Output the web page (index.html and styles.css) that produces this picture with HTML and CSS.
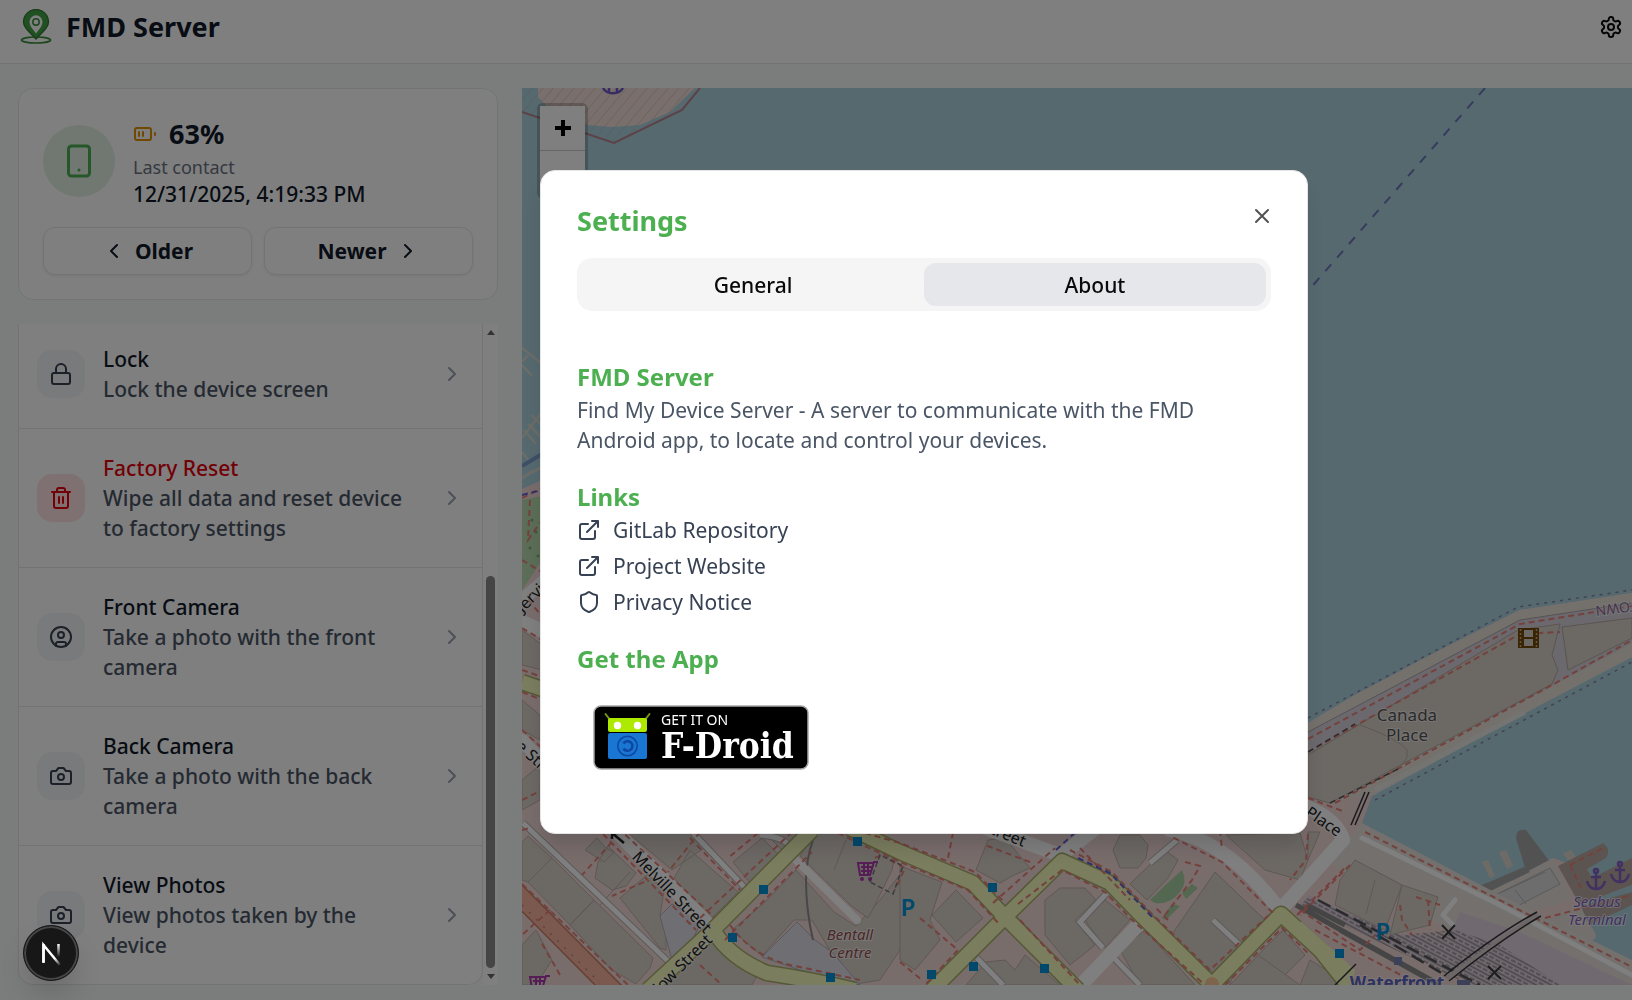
FILE: index.html
```html
<!DOCTYPE html>
<html lang="en">
<head>
<meta charset="utf-8">
<meta name="viewport" content="width=device-width, initial-scale=1">
<title>FMD Server</title>
<link rel="stylesheet" href="styles.css">
</head>
<body>
<svg class="sprite" aria-hidden="true">
  <symbol id="chevron-right" viewBox="0 0 24 24"><path d="m9 18 6-6-6-6"/></symbol>
  <symbol id="chevron-left" viewBox="0 0 24 24"><path d="m15 18-6-6 6-6"/></symbol>
  <symbol id="camera" viewBox="0 0 24 24"><path d="M14.5 4h-5L7 7H4a2 2 0 0 0-2 2v9a2 2 0 0 0 2 2h16a2 2 0 0 0 2-2V9a2 2 0 0 0-2-2h-3l-2.500-3z"/><circle cx="12" cy="13" r="3"/></symbol>
  <symbol id="external" viewBox="0 0 24 24"><path d="M15 3h6v6M10 14 21 3M18 13v6a2 2 0 0 1-2 2H5a2 2 0 0 1-2-2V8a2 2 0 0 1 2-2h6"/></symbol>
</svg>

<div class="app">
  <header class="header">
    <div class="brand">
      <svg class="logo" viewBox="0 0 36 36" aria-hidden="true">
        <ellipse cx="18" cy="31" rx="14.500" ry="3" fill="none" stroke="#388e3c" stroke-width="1.700"/>
        <path d="M18 30C13 24 5.500 19.500 5.500 13a12.500 12.500 0 0 1 25 0C30.500 19.500 23 24 18 30z" fill="#43a047" stroke="#2e7d32" stroke-width="1.300"/>
        <path d="M18 24.500C15 20.500 11.500 17 11.500 12.800a6.500 6.500 0 0 1 13 0C24.500 17 21 20.500 18 24.500z" fill="#fff"/>
        <circle cx="18" cy="13" r="3.200" fill="#fff" stroke="#388e3c" stroke-width="1.500"/>
      </svg>
      <h1 class="brand-name">FMD Server</h1>
    </div>
    <button class="icon-button" type="button" aria-label="Settings">
      <svg class="icon" viewBox="0 0 24 24"><path d="M12.220 2h-.44a2 2 0 0 0-2 2v.18a2 2 0 0 1-1 1.730l-.43.25a2 2 0 0 1-2 0l-.15-.08a2 2 0 0 0-2.730.73l-.22.38a2 2 0 0 0 .73 2.730l.15.1a2 2 0 0 1 1 1.720v.51a2 2 0 0 1-1 1.740l-.15.09a2 2 0 0 0-.73 2.730l.22.38a2 2 0 0 0 2.730.73l.15-.08a2 2 0 0 1 2 0l.43.25a2 2 0 0 1 1 1.730V20a2 2 0 0 0 2 2h.44a2 2 0 0 0 2-2v-.18a2 2 0 0 1 1-1.730l.43-.25a2 2 0 0 1 2 0l.15.08a2 2 0 0 0 2.730-.73l.22-.39a2 2 0 0 0-.73-2.730l-.15-.08a2 2 0 0 1-1-1.740v-.5a2 2 0 0 1 1-1.740l.15-.09a2 2 0 0 0 .73-2.730l-.22-.38a2 2 0 0 0-2.730-.73l-.15.08a2 2 0 0 1-2 0l-.43-.25a2 2 0 0 1-1-1.730V4a2 2 0 0 0-2-2z"/><circle cx="12" cy="12" r="3"/></svg>
    </button>
  </header>

  <main class="main">
    <aside class="sidebar">
      <section class="card">
        <div class="device">
          <div class="device-badge">
            <svg class="icon icon-lg" viewBox="0 0 24 24"><rect x="5" y="2" width="14" height="20" rx="2"/><path d="M12 18h.01"/></svg>
          </div>
          <div>
            <div class="battery">
              <svg class="icon battery-icon" viewBox="0 0 24 24"><rect x="2" y="6" width="16" height="12" rx="2"/><path d="M22 11v2M6 10v4M10 10v4"/></svg>
              63%
            </div>
            <div class="contact-label">Last contact</div>
            <div class="contact-time">12/31/2025, 4:19:33 PM</div>
          </div>
        </div>
        <div class="pager">
          <button class="button" type="button"><svg class="icon"><use href="#chevron-left"/></svg>Older</button>
          <button class="button" type="button">Newer<svg class="icon"><use href="#chevron-right"/></svg></button>
        </div>
      </section>

      <div class="scroller">
        <div class="actions">
          <button class="action" type="button">
            <span class="action-icon"><svg class="icon" viewBox="0 0 24 24"><rect x="3" y="11" width="18" height="11" rx="2"/><path d="M7 11V7a5 5 0 0 1 10 0v4"/></svg></span>
            <span class="action-text"><span class="action-title">Lock</span><span>Lock the device screen</span></span>
            <svg class="icon action-chevron"><use href="#chevron-right"/></svg>
          </button>
          <button class="action action-danger" type="button">
            <span class="action-icon"><svg class="icon" viewBox="0 0 24 24"><path d="M3 6h18M19 6v14a2 2 0 0 1-2 2H7a2 2 0 0 1-2-2V6M8 6V4a2 2 0 0 1 2-2h4a2 2 0 0 1 2 2v2M10 11v6M14 11v6"/></svg></span>
            <span class="action-text"><span class="action-title">Factory Reset</span><span>Wipe all data and reset device to factory settings</span></span>
            <svg class="icon action-chevron"><use href="#chevron-right"/></svg>
          </button>
          <button class="action" type="button">
            <span class="action-icon"><svg class="icon" viewBox="0 0 24 24"><circle cx="12" cy="12" r="10"/><circle cx="12" cy="10" r="3"/><path d="M7 20.660V19a2 2 0 0 1 2-2h6a2 2 0 0 1 2 2v1.660"/></svg></span>
            <span class="action-text"><span class="action-title">Front Camera</span><span>Take a photo with the front camera</span></span>
            <svg class="icon action-chevron"><use href="#chevron-right"/></svg>
          </button>
          <button class="action" type="button">
            <span class="action-icon"><svg class="icon"><use href="#camera"/></svg></span>
            <span class="action-text"><span class="action-title">Back Camera</span><span>Take a photo with the back camera</span></span>
            <svg class="icon action-chevron"><use href="#chevron-right"/></svg>
          </button>
          <button class="action" type="button">
            <span class="action-icon"><svg class="icon"><use href="#camera"/></svg></span>
            <span class="action-text"><span class="action-title">View Photos</span><span>View photos taken by the device</span></span>
            <svg class="icon action-chevron"><use href="#chevron-right"/></svg>
          </button>
        </div>
        <div class="scrollbar" aria-hidden="true">
          <span class="scroll-up"></span>
          <span class="scroll-thumb"></span>
          <span class="scroll-down"></span>
        </div>
      </div>
    </aside>

    <section class="map" aria-label="Map">
      <svg class="map-canvas" viewBox="522 88 1110 897" preserveAspectRatio="xMinYMin slice">
        <defs>
          <pattern id="hatch" width="8" height="8" patternUnits="userSpaceOnUse" patternTransform="rotate(40)"><path d="M0 0V8" stroke="#c9a09c" stroke-width="2"/></pattern>
          <pattern id="rails" width="7" height="7" patternUnits="userSpaceOnUse" patternTransform="rotate(28)"><path d="M0 1.500H7M0 5H5" stroke="#8f8a8f" stroke-width="1.500"/></pattern>
        </defs>
        <rect x="522" y="88" width="1110" height="897" fill="#aad3df"/>

        <!-- peninsula in the north-west -->
        <path d="M522 88V112L614 143 682 110 700 88z" fill="url(#hatch)" opacity=".3"/>
        <path d="M538 88V97L552 111 587 125 612 127 640 125 670 112 695 88z" fill="#f2dfd8"/>
        <path d="M538 88V97L552 111 587 125 612 127 640 125 670 112 695 88z" fill="url(#hatch)" opacity=".35"/>
        <path d="M522 112 614 143 682 110 700 88" fill="none" stroke="#b8848c" stroke-width="2"/>
        <g fill="none" stroke="#6a5ac8" stroke-width="2.500"><path d="M603 88a11 9 0 0 0 20 0M609 86v7M617 86v7"/></g>

        <!-- ferry route -->
        <path d="M1485 88 1308 291" stroke="#7074bc" stroke-width="2" stroke-dasharray="9 9"/>

        <!-- marina -->
        <g fill="none" stroke="#d8d8d2" stroke-width="2.500">
          <path d="M522 348 542 364M528 355 522 362M522 365 532 376M522 438 542 412M532 415 542 426M524 430 536 444M528 424 540 436M522 452 530 462"/>
          <path d="M522 478Q534 470 542 468" stroke-width="3"/>
        </g>
        <path d="M522 466 542 454" stroke="#7d9ed0" stroke-width="4"/>

        <!-- mainland, pier and terminal -->
        <path d="M522 489 542 480 800 500 1308 723 1355 695 1440 650 1520 610 1632 593V657L1540 705 1372 796 1362 823 1440 870 1453 878 1475 895 1520 873 1553 858 1567 863 1603 843 1608 855 1587 868 1592 878 1632 862V952L1600 953 1586 943 1632 985H522z" fill="#f2dad9"/>
        <path d="M1308 723 1355 695 1440 650 1520 610 1632 593V657L1540 705 1372 796 1330 800 1308 790z" fill="#e9e2da"/>
        <path d="M1308 732 1520 620 1632 603 1632 643 1560 682 1340 796 1308 785z" fill="#d6d2dc"/>
        <path d="M1308 755 1518 630 1560 624 1552 655 1558 670 1552 684 1330 803 1308 797z" fill="#d9d0c9" stroke="#b5aaa0"/>
        <path d="M1562 627 1632 618V638L1568 670z" fill="#d9d0c9" stroke="#b5aaa0"/>
        <path d="M1308 732 1520 620 1632 603" fill="none" stroke="#a8a4a4"/>
        <path d="M1360 725Q1400 740 1407 750 1410 765 1390 770" fill="none" stroke="#c0b0a0"/>
        <path d="M1375 790 1525 712" stroke="#e8e8e4" stroke-width="5"/>
        <path d="M1308 718 1518 607 1632 590M1375 800 1632 662M1370 828 1440 870" fill="none" stroke="#8484a8" stroke-width="1.500" stroke-dasharray="3 5"/>
        <path d="M522 500 542 496V560L522 590z" fill="#b8dcb0"/>
        <g fill="#7fae7a"><circle cx="532" cy="520" r="1.500"/><circle cx="536" cy="532" r="1.500"/><circle cx="530" cy="548" r="1.500"/><circle cx="538" cy="556" r="1.500"/></g>

        <!-- terminal docks -->
        <path d="M1440 876Q1462 874 1475 888L1525 868 1516 838Q1516 828 1526 830L1550 862 1478 902z" fill="#a6a4a4"/>
        <path d="M1440 874 1475 899 1553 858 1572 900 1500 920 1370 830z" fill="#e4dfd8"/>
        <path d="M1441 876Q1462 875 1473 889L1524 867 1530 872 1475 898z" fill="#a6a4a4"/>
        <path d="M1482 862 1488 860 1495 876 1490 878zM1499 852 1506 850 1513 866 1507 869zM1563 853 1571 850 1576 857 1568 861z" fill="#ddd6cc"/>
        <path d="M1485 900 1550 868 1560 884 1500 915zM1500 893 1545 872M1496 898 1506 912M1515 890 1526 904" fill="#dadada" stroke="#b5b5b5"/>
        <path d="M1558 866 1603 843Q1612 850 1606 858L1587 869 1592 878 1632 858V885L1580 905z" fill="#b7a9a0"/>
        <path d="M1580 905 1632 885V952Q1600 956 1587 943L1596 935z" fill="#aad3df"/>
        <path d="M1578 907 1632 892V905L1590 925z" fill="#b7a9a0"/>
        <path d="M1540 925 1580 905 1596 938 1585 945z" fill="#e4dfd8"/>
        <path d="M1362 823 1500 895 1632 960V985H1580L1480 945 1350 880 1330 860z" fill="#e6e1dc"/>

        <!-- rail yard -->
        <path d="M1460 912 1520 932 1632 985H1480L1300 905 1308 895 1400 935 1450 935z" fill="#e2d2e0"/>
        <path d="M1300 905 1308 898 1400 935 1455 930 1500 945 1560 985H1470z" fill="url(#rails)"/>
        <path d="M1296 905 1440 985M1340 930 1430 980M1306 905 1345 925" fill="none" stroke="#8a8a8a" stroke-width="5"/>
        <path d="M1318 900 1480 985M1360 925 1450 978" fill="none" stroke="#55555a" stroke-width="2.500" stroke-dasharray="14 6"/>

        <!-- buildings -->
        <g fill="#d9d0c9" stroke="#bdb0a6" stroke-width="1">
          <path d="M528 836 552 858 528 882 522 880V842zM552 858 594 900 570 925 528 882zM594 900 653 958 650 968 636 984 612 970 570 925z"/>
          <path d="M597 838 606 848 614 852 604 862 585 850zM608 846 636 873 626 886 612 890 595 878 598 862z"/>
          <path d="M620 898 648 874 664 890 660 916 666 926 666 950 660 948z"/>
          <path d="M628 833 690 833 704 848 672 870zM690 850 738 892 708 922 674 878z"/>
          <path d="M733 862 762 838 782 858 754 888zM765 833H805L782 850z"/>
          <path d="M765 902 796 870 834 912 856 926 880 900 902 872 918 880 900 950 880 980 850 985 812 920 794 920 762 956 732 930z"/>
          <path d="M815 833 850 833 895 855 892 870 875 905 868 918 850 905 800 856z"/>
          <path d="M663 985 710 938 760 970 752 985zM522 945 536 930 552 960 536 985H522z"/>
          <path d="M900 866 942 882 930 920 940 940 915 970 900 960zM932 915 956 890 983 918 956 942z"/>
          <path d="M976 870 988 840 1005 838 1030 868 1012 876 1000 883z"/>
          <path d="M986 962 1005 960 1015 970 1025 955 1060 985H966z"/>
          <path d="M1045 900 1060 888H1085L1096 900 1075 920 1095 945 1070 965 1045 935zM1085 920 1105 900 1130 920 1105 948z"/>
          <path d="M1120 950 1145 930 1195 985H1140zM1113 850 1120 835 1140 835 1148 845 1146 858 1138 868H1120z"/>
          <path d="M1130 884 1165 850 1178 860 1168 878 1147 900zM1168 940 1206 885 1215 872 1265 920 1240 945 1230 985z"/>
          <path d="M1226 835 1300 833 1308 860 1300 880 1265 870zM1258 955 1283 930 1305 955 1282 978z"/>
          <path d="M1230 985 1258 955 1300 985zM1308 832 1320 832 1308 860zM1340 880 1355 860 1402 885 1385 930 1335 905z"/>
          <path d="M1402 885 1438 897 1430 925 1390 935zM1310 960 1350 985H1300z"/>
          <path d="M522 630 542 645V670L522 665zM522 700 540 715V740L522 730zM522 780 540 765V800L522 810z"/>
          <path d="M630 872 600 905M846 840 834 870M1005 905 1030 930M1375 880 1366 914" fill="none"/>
        </g>
        <path d="M762 957 797 922 815 940 832 952 860 985 800 970zM660 916 672 904 702 920 690 945 672 960z" fill="#dcdce6" stroke="#b0b0bc"/>
        <path d="M813 840Q806 860 806 880 806 910 813 940" fill="none" stroke="#8e8e90" stroke-width="2"/>
        <path d="M1150 900Q1165 885 1182 870 1188 882 1180 892 1170 905 1155 903zM1182 893 1192 884 1198 888 1186 899zM1162 918 1172 904 1180 906 1166 920z" fill="#a9cfa0"/>

        <!-- minor streets -->
        <path d="M523 823 670 963M693 833 747 890M760 835Q778 836 787 843M1107 893 1080 922 1103 948M1113 957 1140 985M1150 863 1177 840M1213 920 1242 947M977 958 1003 985" fill="none" stroke="#b9b3b3" stroke-width="7"/>
        <path d="M523 823 670 963M693 833 747 890M760 835Q778 836 787 843M1107 893 1080 922 1103 948M1113 957 1140 985M1150 863 1177 840M1213 920 1242 947M977 958 1003 985" fill="none" stroke="#fff" stroke-width="5"/>
        <g fill="none" stroke="#fff" stroke-width="14" stroke-linecap="round" stroke-linejoin="round">
          <path d="M607 822 707 923M980 826 1060 855M1064 853 1100 825M1143 920 1078 988M1170 830Q1230 842 1281 912M1283 907 1343 840Q1338 820 1305 806M522 622 545 632"/>
          <path d="M793 857 857 920" stroke-width="8"/>
          <path d="M1362 838 1500 905 1632 975" stroke-width="5"/>
          <path d="M1455 900 1443 915 1453 925" stroke-width="5"/>
          <path d="M522 600 545 580M522 740 545 765" stroke-width="13"/>
        </g>

        <!-- secondary roads -->
        <g fill="none" stroke-linejoin="round">
          <path d="M648 990 713 930 812 830M713 930Q730 958 767 973 813 980 855 990M850 828 900 852 973 883 1005 917 1078 990M932 990 1005 917 1062 861 1110 883 1143 917 1212 985 1281 914 1320 950 1352 990M522 682 545 690" stroke="#a9b06a" stroke-width="17"/>
          <path d="M648 990 713 930 812 830M713 930Q730 958 767 973 813 980 855 990M850 828 900 852 973 883 1005 917 1078 990M932 990 1005 917 1062 861 1110 883 1143 917 1212 985 1281 914 1320 950 1352 990M522 682 545 690" stroke="#f7fabf" stroke-width="14"/>
          <path d="M1290 920 1302 922 1355 970 1352 985 1340 975z" fill="#f7fabf"/>
          <path d="M515 891 615 992" stroke="#c97f66" stroke-width="20"/>
          <path d="M515 891 615 992" stroke="#f9b29c" stroke-width="17"/>
          <circle cx="1212" cy="984" r="7" fill="#fcc99a"/>
          <path d="M522 905 600 983" stroke="#b38b86" stroke-width="1.500" stroke-dasharray="2 8"/>
        </g>

        <!-- footpaths -->
        <g fill="none" stroke="#e8827a" stroke-width="2" stroke-dasharray="6 4">
          <path d="M522 884 628 985M522 830 530 828M603 834 696 930M618 828 714 917M612 842 582 875M644 882 612 896M700 832 668 872M690 838 740 890"/>
          <path d="M700 918 790 834M725 940 812 852M730 925Q755 960 800 967L860 980M700 965 722 985M550 910 522 935M560 975 540 940"/>
          <path d="M758 833 728 858M838 833 858 843 900 862 968 890 1000 925M865 833 900 843 975 872 1005 903M1018 904 1062 870 1105 892 1130 918 1205 985"/>
          <path d="M993 903 1055 848M1030 862 985 845M948 858 953 833M920 918 958 950 925 985M1020 920 1080 985M900 962 922 980"/>
          <path d="M1070 850 1112 872 1150 912 1210 970 1272 912 1222 862 1170 836M1080 848 1130 900M1297 915 1345 868M1225 985 1282 928 1310 955M1220 830 1222 850M1308 834 1306 860 1290 880"/>
          <path d="M1185 862 1200 866 1192 880 1165 915M1168 920 1156 908M890 860 905 868 895 890M875 858 885 853"/>
          <path d="M1308 739 1520 624 1632 606M1308 752 1520 634 1560 632M1335 803 1552 685 1632 640M1308 798 1345 812"/>
          <path d="M1365 832 1632 967M1400 905 1402 920 1412 935M1428 900 1430 930M1416 897 1440 905M1570 865 1605 847M1570 865 1582 890M1545 918 1632 895M1300 910 1360 950 1375 935M1315 930 1420 985M1350 865 1300 915"/>
          <path d="M522 498 542 488M530 500 528 540 542 520M522 560 545 574M528 600 542 616M522 628 542 640M522 670 542 677M522 692 542 700M522 730 542 748M522 800 542 790"/>
        </g>
        <g fill="none" stroke="#6262d6" stroke-width="2" stroke-dasharray="6 4">
          <path d="M1056 850 1078 830M1078 858 1110 873 1152 917M522 495 542 490"/>
        </g>
        <path d="M1308 752 1355 724M1330 803 1400 768" fill="none" stroke="#555" stroke-width="1.500" stroke-dasharray="6 4"/>
        <path d="M1447 978 1538 914" fill="none" stroke="#d8cfcc" stroke-width="5"/>
        <path d="M1369 792 1355 825M1365 792 1351 825M1335 985 1356 964M1444 976Q1495 935 1537 912M1449 981Q1500 940 1541 916" fill="none" stroke="#33333a" stroke-width="1.500"/>
        <path d="M870 882 880 855 903 866 893 894z" fill="none" stroke="#777" stroke-width="1.500" stroke-dasharray="5 3"/>
        <path d="M1442 925 1455 939M1455 925 1442 939M1488 966 1501 979M1501 966 1488 979" stroke="#3c3c3c" stroke-width="2"/>
        <path d="M612 833 624 843M612 833v6M612 833h6" stroke="#222" stroke-width="2.500" fill="none"/>

        <!-- stops and parking -->
        <g fill="#0092da">
          <path d="M853 837h9v9h-9zM759 885h9v9h-9zM728 933h9v9h-9zM826 973h9v9h-9zM988 883h9v9h-9zM927 970h9v9h-9zM969 962h9v9h-9zM1040 964h9v9h-9zM1335 949h9v9h-9z"/>
        </g>
        <path d="M1394 957h8v8h-8zM1457 980h13v6h-13z" fill="#7981b0"/>
        <g fill="none" stroke="#ac39ac" stroke-width="2">
          <path d="M878 862H874L870 875H860L858 863H873M861 867H872M861 871H871M864 863V875M868 863V875"/>
          <path d="M550 976H546L542 989H532L530 977H545M533 981H544M536 977V988M540 977V988"/>
          <circle cx="862" cy="879" r="1"/><circle cx="870" cy="879" r="1"/>
        </g>
        <g fill="none" stroke="#8461c4" stroke-width="2.500">
          <path d="M1596 873V888M1591 877H1601M1587 881Q1589 889 1596 889 1603 889 1605 881"/><circle cx="1596" cy="871" r="2"/>
          <path d="M1620 866V881M1615 870H1625M1611 874Q1613 882 1620 882 1627 882 1629 874"/><circle cx="1620" cy="864" r="2"/>
        </g>
        <path d="M1518 628h21v20h-21z" fill="#734a08"/>
        <path d="M1524 630h9v7h-9zM1524 639h9v7h-9z" fill="#d9d0c9"/>
        <path d="M1520.500 629V647M1536.500 629V647" stroke="#c9b08a" stroke-width="1.500" stroke-dasharray="2 2"/>

        <g class="map-labels" text-anchor="middle">
          <text class="street" transform="translate(668 896) rotate(46)">Melville Street</text>
          <text class="street" text-anchor="end" transform="translate(713 941) rotate(-45)">Thurlow Street</text>
          <text class="street" text-anchor="end" transform="translate(1023 847) rotate(22)">West Hastings Street</text>
          <text class="street" text-anchor="end" transform="translate(1337 837) rotate(34)">Canada Place</text>
          <text class="street" text-anchor="end" transform="translate(551 585) rotate(-45)">Jervis</text>
          <text class="street" transform="translate(531 762) rotate(42)">e Stre</text>
          <text class="place" x="1407" y="721">Canada</text><text class="place" x="1407" y="741">Place</text>
          <text class="shop" x="850" y="940">Bentall</text><text class="shop" x="850" y="958">Centre</text>
          <text class="transit" x="1597" y="907">Seabus</text><text class="transit" x="1597" y="925">Terminal</text>
          <text class="station" x="1397" y="989">Waterfront</text>
          <text class="pier" text-anchor="end" transform="translate(1595 606) rotate(173)">DOWNTOWN</text>
          <text class="parking" x="908" y="916">P</text><text class="parking" x="1383" y="940">P</text>
        </g>
      </svg>
      <div class="zoom-control">
        <button class="zoom-button" type="button" aria-label="Zoom in"><svg viewBox="0 0 16 16" width="16" height="16"><path d="M8 0V16M0 8H16" stroke="#000" stroke-width="4"/></svg></button>
        <button class="zoom-button" type="button" aria-label="Zoom out"></button>
      </div>
    </section>
  </main>
</div>

<div class="overlay">
  <div class="dialog" role="dialog" aria-modal="true" aria-labelledby="dialog-title">
    <h2 class="dialog-title" id="dialog-title">Settings</h2>
    <button class="dialog-close" type="button" aria-label="Close"><svg class="icon" viewBox="0 0 24 24"><path d="M18 6 6 18M6 6l12 12"/></svg></button>
    <div class="tabs" role="tablist">
      <button class="tab" type="button" role="tab" aria-selected="false">General</button>
      <button class="tab tab-active" type="button" role="tab" aria-selected="true">About</button>
    </div>
    <div class="about" role="tabpanel">
      <section>
        <h3 class="about-heading">FMD Server</h3>
        <p class="about-text">Find My Device Server - A server to communicate with the FMD Android app, to locate and control your devices.</p>
      </section>
      <section>
        <h3 class="about-heading">Links</h3>
        <div class="links">
          <a class="link" href="#gitlab"><svg class="icon"><use href="#external"/></svg>GitLab Repository</a>
          <a class="link" href="#website"><svg class="icon"><use href="#external"/></svg>Project Website</a>
          <a class="link" href="#privacy"><svg class="icon" viewBox="0 0 24 24"><path d="M20 13c0 5-3.500 7.500-7.660 8.950a1 1 0 0 1-.67-.01C7.500 20.500 4 18 4 13V6a1 1 0 0 1 1-1c2 0 4.500-1.200 6.240-2.720a1.170 1.170 0 0 1 1.520 0C14.510 3.810 17 5 19 5a1 1 0 0 1 1 1z"/></svg>Privacy Notice</a>
        </div>
      </section>
      <section>
        <h3 class="about-heading">Get the App</h3>
        <a class="store" href="#fdroid" aria-label="Get it on F-Droid">
          <svg viewBox="0 0 248 96" width="248" height="96">
            <rect x="17" y="17" width="214" height="63" rx="7" fill="#000" stroke="#a6a6a6" stroke-width="1.500"/>
            <path d="M28.500 25 32 29.500M72.500 25 69 29.500" stroke="#769616" stroke-width="2" stroke-linecap="round"/>
            <rect x="31" y="29" width="39" height="14" rx="2" fill="#aeea00"/>
            <circle cx="40.500" cy="36.500" r="3.700" fill="#fff"/><circle cx="60.500" cy="36.500" r="3.700" fill="#fff"/>
            <rect x="31" y="44" width="39" height="26" rx="2" fill="#1976d2"/>
            <g fill="none" stroke="#0d47a1"><circle cx="50.500" cy="57" r="9.700" stroke-width="1.500"/><path d="M46.500 54.500A4.800 4.800 0 1 1 46.500 59.500" stroke-width="2.500"/></g>
            <text class="store-small" x="84" y="36">GET IT ON</text>
            <text class="store-name" x="84" y="69">F-Droid</text>
          </svg>
        </a>
      </section>
    </div>
  </div>
</div>

<button class="devtools" type="button" aria-label="Open developer tools">
  <svg viewBox="0 0 40 40" width="40" height="40" fill="none">
    <defs>
      <linearGradient id="n-diagonal" x1="20" y1="20" x2="30" y2="32" gradientUnits="userSpaceOnUse"><stop offset=".4" stop-color="#fff"/><stop offset="1" stop-color="#fff" stop-opacity="0"/></linearGradient>
      <linearGradient id="n-stem" x1="28" y1="11" x2="28" y2="24" gradientUnits="userSpaceOnUse"><stop stop-color="#fff"/><stop offset="1" stop-color="#fff" stop-opacity="0"/></linearGradient>
    </defs>
    <path d="M12.500 29V12L29 32" stroke="url(#n-diagonal)" stroke-width="2.500"/>
    <path d="M12.500 30V11" stroke="#fff" stroke-width="2.500"/>
    <path d="M27.500 11V26" stroke="url(#n-stem)" stroke-width="2.500"/>
  </svg>
</button>
</body>
</html>
```

FILE: styles.css
```css
* { box-sizing: border-box; }

body {
  margin: 0;
  height: 100vh;
  overflow: hidden;
  background: #f7fbf8;
  color: #101828;
  font: 21px/30px "Noto Sans", sans-serif;
}

h1, h2, h3, p { margin: 0; }
button { font: inherit; color: inherit; cursor: pointer; }

.sprite { display: none; }

.icon {
  width: 24px;
  height: 24px;
  flex: none;
  fill: none;
  stroke: currentColor;
  stroke-width: 2;
  stroke-linecap: round;
  stroke-linejoin: round;
}
.icon-lg { width: 36px; height: 36px; }

.app { display: flex; flex-direction: column; height: 100vh; }

.header {
  display: flex;
  align-items: center;
  justify-content: space-between;
  padding: 9px 9px 18px 18px;
  background: #fff;
  border-bottom: 1px solid #e5e7eb;
}
.brand { display: flex; align-items: center; gap: 12px; }
.logo { width: 36px; height: 36px; }
.brand-name { font-size: 27px; line-height: 36px; font-weight: 700; }
.icon-button { display: flex; padding: 0; border: 0; background: none; color: #0a0a0a; }

.main { display: flex; flex: 1; gap: 24px; min-height: 0; padding: 24px 0 15px 18px; }
.sidebar { display: flex; flex-direction: column; gap: 24px; flex: none; width: 480px; }

.card {
  padding: 24px;
  background: #fff;
  border: 1px solid #e5e7eb;
  border-radius: 15px;
}
.device { display: flex; align-items: center; gap: 18px; }
.device-badge {
  display: flex;
  align-items: center;
  justify-content: center;
  width: 72px;
  height: 72px;
  border-radius: 50%;
  background: #e2eee3;
  color: #4caf50;
}
.battery {
  display: flex;
  align-items: center;
  gap: 12px;
  font-size: 27px;
  line-height: 42px;
  font-weight: 700;
}
.battery-icon { color: #e09000; }
.contact-label { font-size: 18px; line-height: 24px; color: #6a7282; }
.contact-time { font-weight: 500; }

.pager { display: flex; gap: 12px; margin-top: 18px; }
.button {
  display: flex;
  align-items: center;
  justify-content: center;
  gap: 9px;
  flex: 1;
  height: 48px;
  padding: 0;
  border: 1px solid #e5e7eb;
  border-radius: 12px;
  background: #fff;
  box-shadow: 0 1px 3px rgba(0, 0, 0, .08);
  font-weight: 700;
}

.scroller { display: flex; flex: 1; min-height: 0; background: linear-gradient(#fff, #fff) right / 15px 100% no-repeat; }
.actions {
  display: flex;
  flex-direction: column;
  justify-content: flex-end;
  flex: 1;
  overflow: hidden;
  background: #fff;
  border: 1px solid #e5e7eb;
  border-top: 0;
  border-radius: 0 0 15px 15px;
}
.action {
  display: flex;
  align-items: center;
  gap: 18px;
  flex: none;
  padding: 24px 18px;
  border: 0;
  border-bottom: 1px solid #e5e7eb;
  background: none;
  text-align: left;
  font-weight: 500;
  color: #4a5565;
}
.action:last-child { border-bottom: 0; }
.action-icon { display: flex; padding: 12px; border-radius: 15px; background: #f3f4f6; color: #364153; }
.action-text { display: flex; flex-direction: column; flex: 1; }
.action-title { color: #101828; }
.action-chevron { color: #99a1af; }
.action-danger .action-title, .action-danger .action-icon { color: #e7000b; }
.action-danger .action-icon { background: #ffe2e2; }

.scrollbar { display: flex; flex-direction: column; align-items: center; width: 15px; padding: 6px 0; }
.scroll-up, .scroll-down { width: 0; border: 4px solid transparent; border-top: 0; border-bottom: 5px solid #666; }
.scroll-down { border-top: 5px solid #666; border-bottom: 0; }
.scroll-thumb { width: 9px; height: 392px; margin: auto 0 6px; border-radius: 5px; background: #8b8b8b; }

.map { position: relative; flex: 1; min-width: 0; overflow: hidden; background: #aad3df; }
.map-canvas { display: block; width: 100%; height: 100%; }
.map-labels { font-family: "Noto Sans", sans-serif; }
.map-labels text { stroke: rgba(255, 255, 255, .6); stroke-width: 2px; paint-order: stroke; }
.street { font-size: 16px; fill: #222; }
.place { font-size: 17px; fill: #555; }
.shop { font-size: 15px; font-style: italic; fill: #965050; }
.transit { font-size: 15px; font-style: italic; fill: #8461c4; }
.station { font-size: 17px; font-weight: 700; fill: #5a62c0; }
.pier { font-size: 14px; fill: #8a6a9a; }
.map-labels .parking { font-size: 24px; font-weight: 600; fill: #0092da; stroke: none; }

.zoom-control {
  position: absolute;
  top: 15px;
  left: 15px;
  display: flex;
  flex-direction: column;
  border: 3px solid rgba(0, 0, 0, .2);
  border-radius: 6px;
}
.zoom-button {
  display: flex;
  align-items: center;
  justify-content: center;
  width: 45px;
  height: 45px;
  padding: 0;
  border: 0;
  background: #fff;
}
.zoom-button:first-child { border-bottom: 1px solid #ccc; }

.overlay {
  position: fixed;
  inset: 0;
  display: flex;
  align-items: flex-start;
  padding: 170px 324px 0 540px;
  background: rgba(0, 0, 0, .5);
}
.dialog {
  position: relative;
  flex: 1;
  padding: 36px 36px 48px;
  border: 1px solid #e5e5e5;
  border-radius: 15px;
  background: #fff;
  color: #0a0a0a;
  box-shadow: 0 15px 22px -4px rgba(0, 0, 0, .15);
}
.dialog-title { font-size: 27px; line-height: 27px; font-weight: 700; color: #4caf50; }
.dialog-close {
  position: absolute;
  top: 33px;
  right: 33px;
  display: flex;
  padding: 0;
  border: 0;
  background: none;
  color: #525252;
}
.tabs {
  display: flex;
  margin-top: 24px;
  padding: 5px;
  border-radius: 15px;
  background: #f5f5f5;
}
.tab {
  flex: 1;
  height: 43px;
  padding: 0;
  border: 0;
  border-radius: 12px;
  background: none;
  font-weight: 500;
}
.tab-active { background: #e5e7eb; }

.about { display: flex; flex-direction: column; gap: 24px; margin-top: 48px; }
.about-heading { font-size: 24px; line-height: 36px; font-weight: 700; color: #4caf50; }
.about-text { color: #4a5565; }
.links { display: flex; flex-direction: column; align-items: flex-start; gap: 6px; }
.link { display: flex; align-items: center; gap: 12px; color: #364153; text-decoration: none; }
.store { display: block; width: 248px; height: 96px; margin-top: 12px; }
.store-small { font: 14px "Noto Sans", sans-serif; fill: #fff; }
.store-name { font: 700 35px "DejaVu Serif Condensed", "DejaVu Serif", serif; fill: #fff; }

.devtools {
  position: fixed;
  left: 23px;
  bottom: 19px;
  display: flex;
  align-items: center;
  justify-content: center;
  width: 56px;
  height: 56px;
  padding: 0;
  border: 1px solid #171717;
  border-radius: 50%;
  background: #171717;
  box-shadow: inset 0 0 0 2px #454545, 0 16px 32px -8px rgba(0, 0, 0, .24);
}
```
